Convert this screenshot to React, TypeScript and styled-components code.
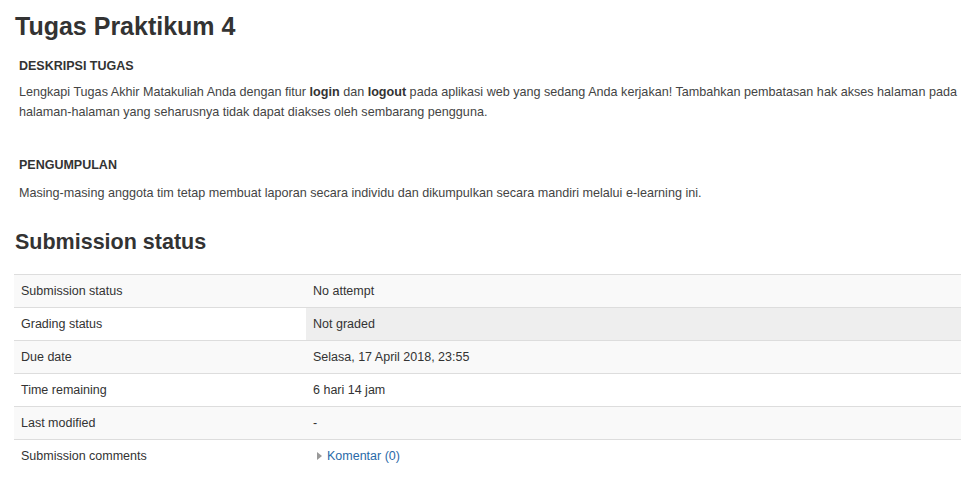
import React from 'react';
import styled, { createGlobalStyle } from 'styled-components';

const GlobalStyle = createGlobalStyle`
  html, body {
    margin: 0;
    padding: 0;
    background: #fff;
  }
  body {
    font-family: "Liberation Sans", Arial, Helvetica, sans-serif;
    color: #333;
    font-size: 12.5px;
  }
`;

const Page = styled.div`
  padding: 11px 0 0 14px;
`;

const Title = styled.h2`
  margin: 0 0 15px 1px;
  font-size: 25px;
  line-height: 30px;
  font-weight: bold;
  color: #333;
`;

const Intro = styled.div`
  padding-left: 5px;
  padding-right: 0;
`;

const SectionLabel = styled.div<{ $gap?: number }>`
  margin-top: ${(p) => p.$gap ?? 0}px;
  font-weight: bold;
  font-size: 12.5px;
  line-height: 20px;
  color: #333;
`;

const Para = styled.p<{ $gap: number }>`
  margin: ${(p) => p.$gap}px 0 0;
  font-size: 12.6px;
  line-height: 20px;
  color: #444;

  b {
    color: #333;
  }
`;

const Heading = styled.h3`
  margin: 25px 0 18px 1px;
  font-size: 21.5px;
  line-height: 28px;
  font-weight: bold;
  color: #333;
`;

const Table = styled.table`
  width: 100%;
  border-collapse: collapse;
  font-size: 12.5px;
  color: #333;
`;

const Row = styled.tr<{ $striped: boolean }>`
  background: ${(p) => (p.$striped ? '#f9f9f9' : '#fff')};
  border-top: 1px solid #ddd;
`;

const Cell = styled.td<{ $label?: boolean; $shade?: boolean }>`
  height: 32px;
  padding: 0 7px;
  vertical-align: middle;
  width: ${(p) => (p.$label ? '278px' : 'auto')};
  background: ${(p) => (p.$shade ? '#eee' : 'transparent')};
  color: #333;
`;

const Toggle = styled.a`
  display: inline-flex;
  align-items: center;
  gap: 5px;
  color: #2a6aa8;
  text-decoration: none;
  cursor: pointer;
`;

const Arrow = styled.span`
  width: 0;
  height: 0;
  border-top: 4px solid transparent;
  border-bottom: 4px solid transparent;
  border-left: 5px solid #999;
  margin-left: 4px;
`;

const rows: { label: string; value: React.ReactNode; shade?: boolean }[] = [
  { label: 'Submission status', value: 'No attempt' },
  { label: 'Grading status', value: 'Not graded', shade: true },
  { label: 'Due date', value: 'Selasa, 17 April 2018, 23:55' },
  { label: 'Time remaining', value: '6 hari 14 jam' },
  { label: 'Last modified', value: '-' },
  {
    label: 'Submission comments',
    value: (
      <Toggle>
        <Arrow />
        Komentar (0)
      </Toggle>
    ),
  },
];

export default function App() {
  return (
    <>
      <GlobalStyle />
      <Page>
        <Title>Tugas Praktikum 4</Title>
        <Intro>
          <SectionLabel>DESKRIPSI TUGAS</SectionLabel>
          <Para $gap={6}>
            Lengkapi Tugas Akhir Matakuliah Anda dengan fitur <b>login</b> dan{' '}
            <b>logout</b> pada aplikasi web yang sedang Anda kerjakan! Tambahkan
            pembatasan hak akses halaman pada halaman-halaman yang seharusnya
            tidak dapat diakses oleh sembarang pengguna.
          </Para>
          <SectionLabel $gap={33}>PENGUMPULAN</SectionLabel>
          <Para $gap={8}>
            Masing-masing anggota tim tetap membuat laporan secara individu dan
            dikumpulkan secara mandiri melalui e-learning ini.
          </Para>
        </Intro>
        <Heading>Submission status</Heading>
        <Table>
          <tbody>
            {rows.map((r, i) => (
              <Row key={r.label} $striped={i % 2 === 0 && i < 5}>
                <Cell $label>{r.label}</Cell>
                <Cell $shade={r.shade}>{r.value}</Cell>
              </Row>
            ))}
          </tbody>
        </Table>
      </Page>
    </>
  );
}
